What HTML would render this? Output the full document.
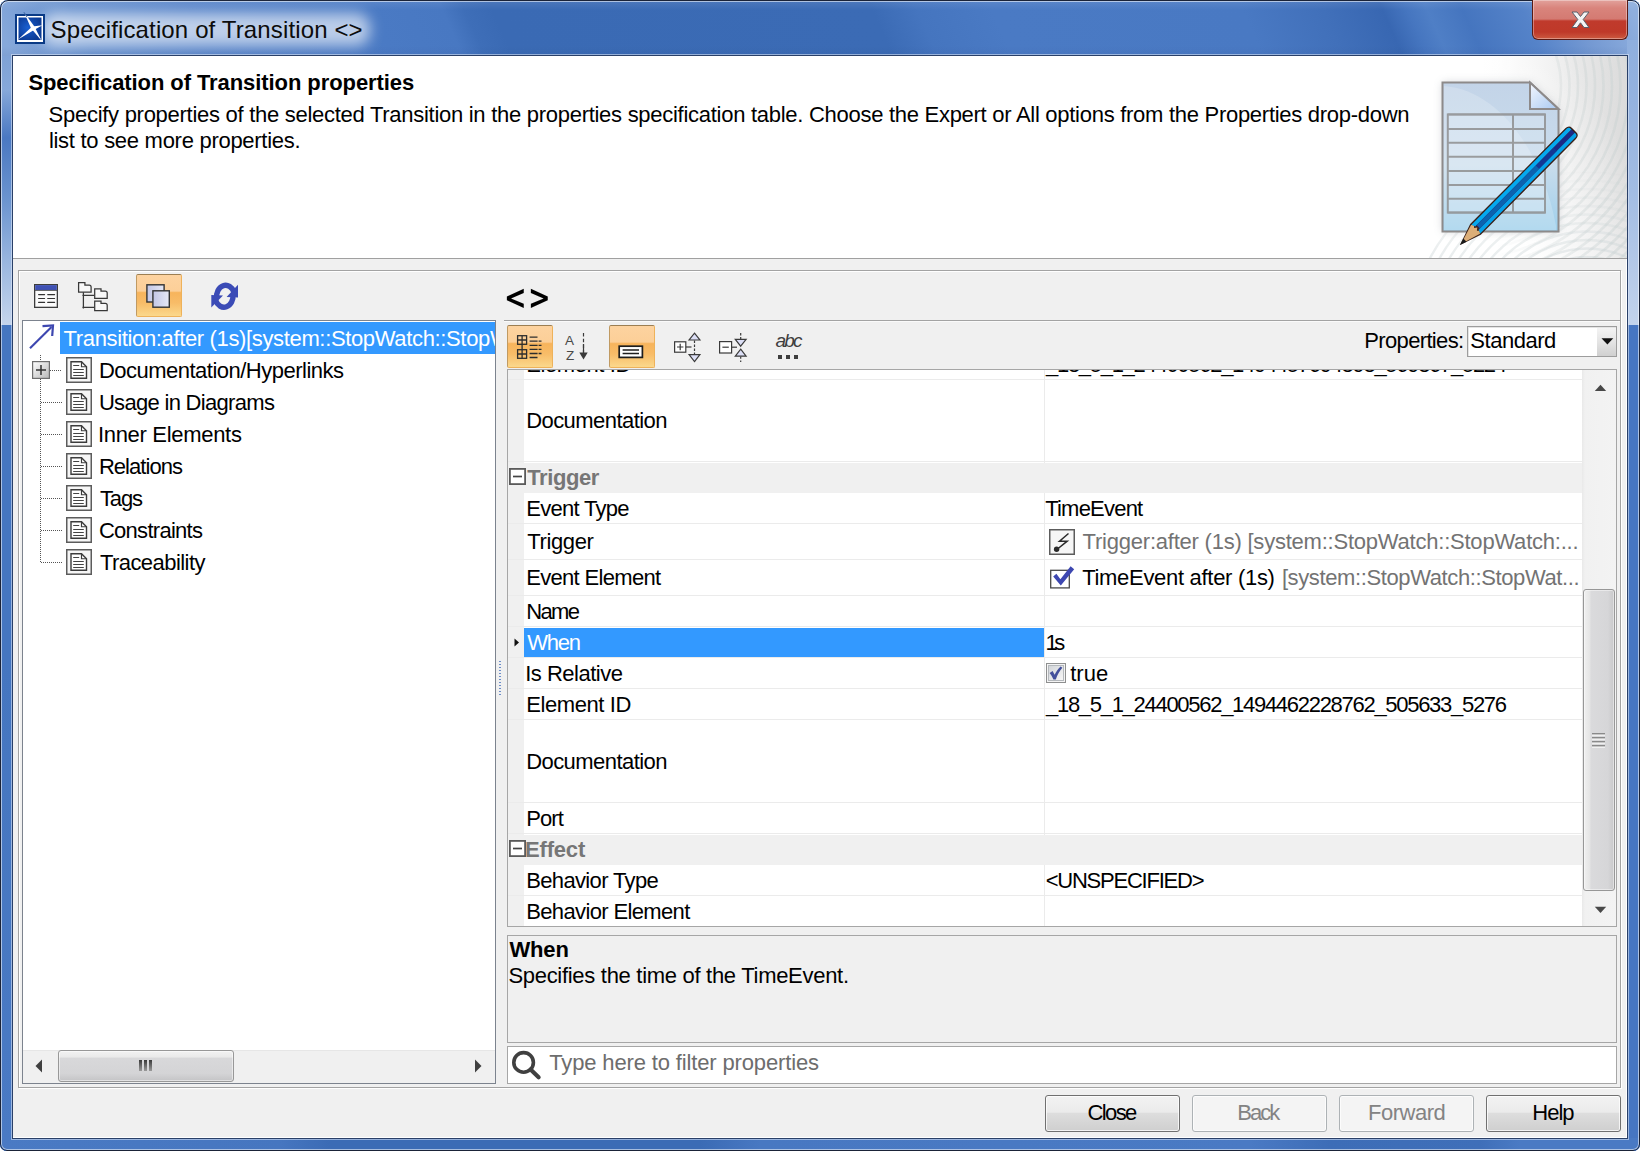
<!DOCTYPE html>
<html lang="en"><head><meta charset="utf-8"><title>Specification of Transition &lt;&gt;</title>
<style>
*{box-sizing:border-box;margin:0;padding:0}
html,body{width:1640px;height:1151px;overflow:hidden;background:#fff}
body{font-family:"Liberation Sans",sans-serif;font-size:22px;color:#000;position:relative}
.a{position:absolute}
.t{position:absolute;white-space:nowrap}
.b{font-weight:bold}
svg{position:absolute;overflow:visible}
#win{left:0;top:0;width:1640px;height:1151px;border-radius:8px 8px 7px 7px;overflow:hidden;background:#4a7ac2}
</style></head>
<body>
<div id="win" class="a">
<!-- sec_frame -->
<div class="a" style="left:0;top:0;width:1640px;height:1151px;background:#4576c0"></div>
<div class="a" style="left:-40px;top:0;width:1760px;height:56px;transform:skewX(24deg);transform-origin:0 0;background:linear-gradient(to right,#86a8da 28px,#7a9fd6 58px,#6690ce 108px,#5582c8 228px,#4a7ac4 408px,#4878c2 478px,#3e6eb8 500px,#3a6ab4 528px,#3b6bb5 908px,#4575bf 953px,#4a7ac4 1028px,#4979c3 1278px,#4170ba 1358px,#3867b2 1418px,#4676c0 1443px,#4f7fc6 1463px,#4575bf 1498px,#5583c9 1558px,#7398d2 1608px,#8fafde 1668px,#8fafde 1728px)"></div>
<div class="a" style="left:0;top:0;width:1640px;height:56px;background:linear-gradient(to bottom,rgba(255,255,255,.10) 0,rgba(255,255,255,0) 10px,rgba(255,255,255,0) 46px,rgba(20,40,90,.06) 56px)"></div>
<div class="a" style="left:0;top:56px;width:13px;height:1095px;background:linear-gradient(to bottom,#7fa2d6 0,#86a8da 34px,#4a78c2 82px,#6b94cf 144px,#98b5df 204px,#c5d5ec 269px,#4576c0 269px,#4576c0 600px,#4a7ac4 100%)"></div>
<div class="a" style="left:1627px;top:40px;width:13px;height:1111px;background:linear-gradient(to bottom,#8fafde 0,#94b2df 60px,#a2bce3 150px,#b5c9e8 230px,#c2d3ec 285px,#4676c2 285px,#4676c2 100%)"></div>
<div class="a" style="left:0;top:1138px;width:1640px;height:13px;background:linear-gradient(to right,#4a7ac4 0,#4676c0 280px,#3b6bb5 330px,#3b6bb5 700px,#4878c2 760px,#4a7ac4 1250px,#3d6db7 1330px,#3f6fb9 1480px,#4a7ac4 1520px,#4a7ac4 1640px)"></div>
<div class="a" style="left:0;top:0;width:1640px;height:1151px;border:1px solid #1a2338;border-radius:8px 8px 7px 7px;box-shadow:inset 0 0 0 1px rgba(255,255,255,.55)"></div>
<div class="a" style="left:42px;top:13px;width:328px;height:33px;border-radius:14px;background:rgba(255,255,255,.62);filter:blur(7px)"></div>
<svg style="left:15px;top:14px" width="30" height="30" viewBox="0 0 30 30"><defs><radialGradient id="ig" cx="0.4" cy="0.45" r="0.6"><stop offset="0" stop-color="#1a5fd0"/><stop offset="1" stop-color="#0b3a94"/></radialGradient></defs><rect x="0" y="0" width="30" height="30" fill="#0a3a86"/><rect x="2" y="2" width="26" height="26" fill="#fff"/><rect x="3.5" y="3.5" width="23" height="22.5" fill="url(#ig)"/><path d="M9 -1.7 L19.4 12.4 L26.8 27.1 L16.2 14.6 Z" fill="#fff"/><path d="M3.4 25.3 L17.2 12.4 L27.4 11.2 L19 15.9 Z" fill="#fff"/><path d="M9 -1.7 L12 3" stroke="#0a3a86" stroke-width=".8"/></svg>
<div class="t" id="ttl" style="left:50.50px;top:13.08px;line-height:34px;height:34px;font-size:24px;letter-spacing:0.135px;color:#0c0c0c;">Specification of Transition &lt;&gt;</div>
<div class="a" style="left:1532px;top:0;width:96px;height:40px;border:1px solid #5a1a14;border-top:none;border-radius:0 0 6px 6px;background:linear-gradient(to bottom,#e2a29c 0,#d9847c 8px,#d47a72 19px,#c03a2c 21px,#bf3929 32px,#cc5a40 39px);box-shadow:inset 0 0 0 1px rgba(255,255,255,.35)"></div>
<svg style="left:1571px;top:11px" width="19" height="18" viewBox="0 0 19 18"><path d="M1 1 H6 L9.5 5.5 L13 1 H18 L12.2 8.5 L18 16.5 H13 L9.5 11.8 L6 16.5 H1 L6.8 8.5 Z" fill="#f4f4f4" stroke="#5a5f6a" stroke-width="1" stroke-linejoin="round"/></svg>
<div class="a" style="left:12px;top:55px;width:1616px;height:1084px;background:#f0f0f0;border:1px solid #2a4068;box-shadow:0 0 0 1px rgba(225,235,250,.55),inset -1px -1px 0 #fff"></div>

<!-- sec_header -->
<div class="a" style="left:13px;top:56px;width:1614px;height:202px;background:linear-gradient(62deg,rgba(255,255,255,1) 0,rgba(255,255,255,1) 88%,rgba(255,255,255,0) 97%),linear-gradient(to right,#fff 0,#fff 1470px,#f1f1f1 1530px,#e4e4e4 1580px,#dbdbdb 1614px)"></div>
<svg style="left:1387px;top:56px;overflow:hidden" width="240" height="202" viewBox="0 0 240 202"><defs><linearGradient id="am" x1="0" y1="0" x2="1" y2="0"><stop offset="0.45" stop-color="#fff" stop-opacity="0"/><stop offset="0.75" stop-color="#fff" stop-opacity=".7"/><stop offset="1" stop-color="#fff" stop-opacity="1"/></linearGradient><linearGradient id="am2" x1="0" y1="0" x2="0" y2="1"><stop offset="0.55" stop-color="#fff" stop-opacity="0"/><stop offset="1" stop-color="#fff" stop-opacity="1"/></linearGradient><mask id="amk"><rect width="240" height="202" fill="url(#am)"/></mask><mask id="amk2"><rect x="40" width="200" height="202" fill="url(#am2)"/></mask></defs><g fill="none" stroke="#c6d0d0" stroke-width="2.6" opacity=".42" mask="url(#amk)"><circle cx="78" cy="30" r="96.0"/><circle cx="78" cy="30" r="104.5"/><circle cx="78" cy="30" r="113.0"/><circle cx="78" cy="30" r="121.5"/><circle cx="78" cy="30" r="130.0"/><circle cx="78" cy="30" r="138.5"/><circle cx="78" cy="30" r="147.0"/><circle cx="78" cy="30" r="155.5"/><circle cx="78" cy="30" r="164.0"/><circle cx="78" cy="30" r="172.5"/><circle cx="78" cy="30" r="181.0"/><circle cx="78" cy="30" r="189.5"/><circle cx="78" cy="30" r="198.0"/><circle cx="78" cy="30" r="206.5"/><circle cx="78" cy="30" r="215.0"/><circle cx="78" cy="30" r="223.5"/><circle cx="78" cy="30" r="232.0"/><circle cx="78" cy="30" r="240.5"/><circle cx="78" cy="30" r="249.0"/><circle cx="78" cy="30" r="257.5"/><circle cx="78" cy="30" r="266.0"/><circle cx="78" cy="30" r="274.5"/></g><g fill="none" stroke="#c8d2d4" stroke-width="2.4" opacity=".4" mask="url(#amk2)"><circle cx="200" cy="285" r="50.0"/><circle cx="200" cy="285" r="58.5"/><circle cx="200" cy="285" r="67.0"/><circle cx="200" cy="285" r="75.5"/><circle cx="200" cy="285" r="84.0"/><circle cx="200" cy="285" r="92.5"/><circle cx="200" cy="285" r="101.0"/><circle cx="200" cy="285" r="109.5"/><circle cx="200" cy="285" r="118.0"/><circle cx="200" cy="285" r="126.5"/><circle cx="200" cy="285" r="135.0"/><circle cx="200" cy="285" r="143.5"/><circle cx="200" cy="285" r="152.0"/><circle cx="200" cy="285" r="160.5"/><circle cx="200" cy="285" r="169.0"/><circle cx="200" cy="285" r="177.5"/></g></svg>
<div class="a" style="left:13px;top:258px;width:1614px;height:1px;background:#a0a0a0"></div>
<div class="t b" id="h1" style="left:28.40px;top:68.18px;line-height:29px;height:29px;letter-spacing:-0.078px;">Specification of Transition properties</div>
<div class="t" id="h2" style="left:48.60px;top:102.28px;line-height:26px;height:26px;letter-spacing:-0.277px;">Specify properties of the selected Transition in the properties specification table. Choose the Expert or All options from the Properties drop-down</div>
<div class="t" id="h3" style="left:48.90px;top:128.18px;line-height:26px;height:26px;letter-spacing:-0.278px;">list to see more properties.</div>
<svg style="left:1436px;top:76px" width="150" height="175" viewBox="0 0 150 175"><defs><linearGradient id="dg" x1="0" y1="0" x2="0" y2="1"><stop offset="0" stop-color="#c3d4e8"/><stop offset=".55" stop-color="#c9dcec"/><stop offset="1" stop-color="#9fd0ec"/></linearGradient><linearGradient id="fg" x1="0" y1="0" x2="1" y2="1"><stop offset="0" stop-color="#f4f8ff"/><stop offset="1" stop-color="#a8c8f0"/></linearGradient><filter id="sh" x="-20%" y="-20%" width="140%" height="140%"><feGaussianBlur stdDeviation="4"/></filter></defs><path d="M6.5 6.5 H94 L122.5 33 V155.5 H6.5 Z" fill="#9aa0a8" opacity=".45" filter="url(#sh)"/><path d="M6.5 6.5 H94 L122.5 33 V155.5 H6.5 Z" fill="url(#dg)" stroke="#8d8a8a" stroke-width="2" stroke-linejoin="miter"/><path d="M8 10 C60 14 105 70 120 150 V154 H8 Z" fill="#fff" opacity=".2"/><path d="M94 6.5 V33 H122.5 Z" fill="url(#fg)" stroke="#8d8a8a" stroke-width="2" stroke-linejoin="miter"/><g stroke="#8c8b8b" stroke-width="2" fill="none" opacity=".8"><rect x="11.8" y="38.4" width="97.2" height="98.2" fill="#e8f0f8" fill-opacity=".35"/><line x1="11.8" y1="38.4" x2="109.0" y2="38.4"/><line x1="11.8" y1="53.0" x2="109.0" y2="53.0"/><line x1="11.8" y1="66.7" x2="109.0" y2="66.7"/><line x1="11.8" y1="80.7" x2="109.0" y2="80.7"/><line x1="11.8" y1="95.0" x2="109.0" y2="95.0"/><line x1="11.8" y1="108.9" x2="109.0" y2="108.9"/><line x1="11.8" y1="122.7" x2="109.0" y2="122.7"/><line x1="11.8" y1="136.6" x2="109.0" y2="136.6"/><line x1="77.0" y1="38.4" x2="77.0" y2="136.6"/></g><g transform="translate(24 169) rotate(-45.2)"><path d="M0 0 L22 -7.5 H157 Q162 -7.5 162 -3 V3 Q162 7.5 157 7.5 H22 Z" fill="#3a2018"/><path d="M1.5 0 L22 -6.3 L24 -4 L22 -2 L24.5 0 L22 2 L24 4 L22 6.3 Z" fill="#dcae78"/><path d="M0 0 L7 -2.3 L7 2.3 Z" fill="#1a1a1a"/><path d="M22.5 -6.2 H158 Q160.5 -6.2 160.5 -3 V-2.2 H24 Z" fill="#05a9ef"/><path d="M24.5 -2.2 H160.5 V2.4 H24.5 L26 0 Z" fill="#1c2a86"/><path d="M24 2.4 H160.5 V3.2 Q160.5 6.2 158 6.2 H22.5 Z" fill="#05a0ea"/><path d="M26 -2.2 H110 V2.4 H26 Z" fill="#0a68b4" opacity=".9"/><path d="M110 -2.2 H135 V2.4 H110 Z" fill="#123c98" opacity=".8"/></g></svg>

<!-- sec_left -->
<div class="a" style="left:18px;top:270px;width:1603px;height:818px;border:1px solid #a3a3a3;box-shadow:inset 1px 1px 0 #fff,1px 1px 0 #fff"></div>
<svg style="left:34px;top:284px" width="24" height="24" viewBox="0 0 24 24"><rect x=".65" y=".65" width="22.7" height="22.7" fill="#fbfbfb" stroke="#3c3c3c" stroke-width="1.3"/><rect x="1.2" y="1.1" width="21.6" height="5" fill="#3f51b5"/><path d="M.6 6.4 H23.4" stroke="#4a4a4a" stroke-width=".9"/><path d="M4.6 10.6 H10.6 M13.7 10.6 H20.6 M4.6 14.5 H10.6 M13.7 14.5 H20.6 M4.6 18.4 H10.6 M13.7 18.4 H20.6" stroke="#333" stroke-width="1.15" stroke-linecap="round"/></svg>
<svg style="left:77px;top:281px" width="32" height="32" viewBox="0 0 32 32"><path d="M6.4 11.2 V27.6 M5.4 14.4 H17 M5.4 26.4 H17" fill="none" stroke="#383838" stroke-width="1.25"/><path d="M1.6 1.6 h6.3 v2.4 h4.3 q1.9 0 1.9 1.9 v5.2 h-12.5 z" fill="#f8f8f8" stroke="#383838" stroke-width="1.25" stroke-linejoin="miter"/><path d="M17.7 7.8 h6.3 v2.4 h4.3 q1.9 0 1.9 1.9 v5.2 h-12.5 z" fill="#f8f8f8" stroke="#383838" stroke-width="1.25" stroke-linejoin="miter"/><path d="M17.7 20 h6.3 v2.4 h4.3 q1.9 0 1.9 1.9 v5.2 h-12.5 z" fill="#f8f8f8" stroke="#383838" stroke-width="1.25" stroke-linejoin="miter"/></svg>
<div class="a" style="left:136px;top:274px;width:46px;height:43px;background:linear-gradient(to bottom,#fdd3a0 0,#fccf98 39%,#f7b45c 43%,#f8bc68 68%,#fbd88c 100%);border:1px solid #eeb25a;border-top-color:#9c7e52;border-left-color:#c09a62;border-radius:2px;"></div>
<svg style="left:145px;top:283px" width="27" height="27" viewBox="0 0 27 27"><defs><linearGradient id="cg" x1="0" y1="0" x2="1" y2="0"><stop offset="0" stop-color="#c2c6e6"/><stop offset="1" stop-color="#e6e8f5"/></linearGradient></defs><rect x="1.9" y="1.8" width="17.2" height="17.2" fill="url(#cg)" stroke="#333" stroke-width="1.4"/><rect x="7.9" y="7.8" width="16.4" height="16.4" fill="url(#cg)" stroke="#333" stroke-width="1.4"/></svg>
<svg style="left:210.5px;top:282px" width="28" height="29" viewBox="0 0 28 29"><g fill="none" stroke="#3b4bb6" stroke-width="5.4"><path d="M5.74 16.21 A9.0 11.0 0 0 1 22.94 10.18"/><path d="M21.86 12.29 A9.0 11.0 0 0 1 4.66 18.32"/></g><path d="M27 2.8 L27 15.6 L15.6 14.9 Z" fill="#3b4bb6"/><path d="M.3 25.6 L.3 13 L12 13.5 Z" fill="#3b4bb6"/></svg>
<div class="a" style="left:22px;top:320px;width:474px;height:764px;background:#fff;border:1px solid #7c838e"></div>
<div class="a" style="left:60px;top:322px;width:435px;height:32px;background:#3399ff;overflow:hidden"><div class="t" id="trs" style="left:3.50px;top:1.73px;line-height:29px;height:29px;color:#fff;letter-spacing:-0.351px;">Transition:after (1s)[system::StopWatch::StopWatch::running</div>
</div>
<svg style="left:28px;top:323px" width="28" height="28" viewBox="0 0 28 28"><path d="M2 25.2 L23.5 4" stroke="#3d47b0" stroke-width="2.1" fill="none"/><path d="M14.5 3.2 L25 2.4 L24.2 13" stroke="#3d47b0" stroke-width="2.2" fill="none" stroke-linejoin="miter"/></svg>
<div class="a" style="left:40px;top:355px;width:1px;height:208px;background:repeating-linear-gradient(to bottom,#555 0,#555 1px,transparent 1px,transparent 2px)"></div>
<div class="a" style="left:50px;top:370px;width:12px;height:1px;background:repeating-linear-gradient(to right,#555 0,#555 1px,transparent 1px,transparent 2px)"></div>
<svg style="left:66px;top:357px" width="26" height="26" viewBox="0 0 26 26"><rect x=".75" y=".75" width="24.5" height="24.5" fill="#f6f6f6" stroke="#5c5c5c" stroke-width="1.5"/><path d="M5 4.75 H15.5 L20.5 9.75 V21.25 H5 Z" fill="#fff" stroke="#3c3c3c" stroke-width="1.4" stroke-linejoin="miter"/><path d="M15.5 4.75 V9.75 H20.5" fill="none" stroke="#3c3c3c" stroke-width="1.2"/><path d="M7.2 8.5 H13.2 M7.2 12.5 H17.8 M7.2 15.5 H17.8 M7.2 18.5 H17.8" stroke="#444" stroke-width="1"/></svg>
<div class="t" id="tr0" style="left:98.90px;top:355.73px;line-height:29px;height:29px;letter-spacing:-0.508px;">Documentation/Hyperlinks</div>
<div class="a" style="left:41px;top:402px;width:21px;height:1px;background:repeating-linear-gradient(to right,#555 0,#555 1px,transparent 1px,transparent 2px)"></div>
<svg style="left:66px;top:389px" width="26" height="26" viewBox="0 0 26 26"><rect x=".75" y=".75" width="24.5" height="24.5" fill="#f6f6f6" stroke="#5c5c5c" stroke-width="1.5"/><path d="M5 4.75 H15.5 L20.5 9.75 V21.25 H5 Z" fill="#fff" stroke="#3c3c3c" stroke-width="1.4" stroke-linejoin="miter"/><path d="M15.5 4.75 V9.75 H20.5" fill="none" stroke="#3c3c3c" stroke-width="1.2"/><path d="M7.2 8.5 H13.2 M7.2 12.5 H17.8 M7.2 15.5 H17.8 M7.2 18.5 H17.8" stroke="#444" stroke-width="1"/></svg>
<div class="t" id="tr1" style="left:98.90px;top:387.73px;line-height:29px;height:29px;letter-spacing:-0.692px;">Usage in Diagrams</div>
<div class="a" style="left:41px;top:434px;width:21px;height:1px;background:repeating-linear-gradient(to right,#555 0,#555 1px,transparent 1px,transparent 2px)"></div>
<svg style="left:66px;top:421px" width="26" height="26" viewBox="0 0 26 26"><rect x=".75" y=".75" width="24.5" height="24.5" fill="#f6f6f6" stroke="#5c5c5c" stroke-width="1.5"/><path d="M5 4.75 H15.5 L20.5 9.75 V21.25 H5 Z" fill="#fff" stroke="#3c3c3c" stroke-width="1.4" stroke-linejoin="miter"/><path d="M15.5 4.75 V9.75 H20.5" fill="none" stroke="#3c3c3c" stroke-width="1.2"/><path d="M7.2 8.5 H13.2 M7.2 12.5 H17.8 M7.2 15.5 H17.8 M7.2 18.5 H17.8" stroke="#444" stroke-width="1"/></svg>
<div class="t" id="tr2" style="left:97.90px;top:419.73px;line-height:29px;height:29px;letter-spacing:-0.305px;">Inner Elements</div>
<div class="a" style="left:41px;top:466px;width:21px;height:1px;background:repeating-linear-gradient(to right,#555 0,#555 1px,transparent 1px,transparent 2px)"></div>
<svg style="left:66px;top:453px" width="26" height="26" viewBox="0 0 26 26"><rect x=".75" y=".75" width="24.5" height="24.5" fill="#f6f6f6" stroke="#5c5c5c" stroke-width="1.5"/><path d="M5 4.75 H15.5 L20.5 9.75 V21.25 H5 Z" fill="#fff" stroke="#3c3c3c" stroke-width="1.4" stroke-linejoin="miter"/><path d="M15.5 4.75 V9.75 H20.5" fill="none" stroke="#3c3c3c" stroke-width="1.2"/><path d="M7.2 8.5 H13.2 M7.2 12.5 H17.8 M7.2 15.5 H17.8 M7.2 18.5 H17.8" stroke="#444" stroke-width="1"/></svg>
<div class="t" id="tr3" style="left:98.90px;top:451.73px;line-height:29px;height:29px;letter-spacing:-0.952px;">Relations</div>
<div class="a" style="left:41px;top:498px;width:21px;height:1px;background:repeating-linear-gradient(to right,#555 0,#555 1px,transparent 1px,transparent 2px)"></div>
<svg style="left:66px;top:485px" width="26" height="26" viewBox="0 0 26 26"><rect x=".75" y=".75" width="24.5" height="24.5" fill="#f6f6f6" stroke="#5c5c5c" stroke-width="1.5"/><path d="M5 4.75 H15.5 L20.5 9.75 V21.25 H5 Z" fill="#fff" stroke="#3c3c3c" stroke-width="1.4" stroke-linejoin="miter"/><path d="M15.5 4.75 V9.75 H20.5" fill="none" stroke="#3c3c3c" stroke-width="1.2"/><path d="M7.2 8.5 H13.2 M7.2 12.5 H17.8 M7.2 15.5 H17.8 M7.2 18.5 H17.8" stroke="#444" stroke-width="1"/></svg>
<div class="t" id="tr4" style="left:99.90px;top:483.73px;line-height:29px;height:29px;letter-spacing:-1.124px;">Tags</div>
<div class="a" style="left:41px;top:530px;width:21px;height:1px;background:repeating-linear-gradient(to right,#555 0,#555 1px,transparent 1px,transparent 2px)"></div>
<svg style="left:66px;top:517px" width="26" height="26" viewBox="0 0 26 26"><rect x=".75" y=".75" width="24.5" height="24.5" fill="#f6f6f6" stroke="#5c5c5c" stroke-width="1.5"/><path d="M5 4.75 H15.5 L20.5 9.75 V21.25 H5 Z" fill="#fff" stroke="#3c3c3c" stroke-width="1.4" stroke-linejoin="miter"/><path d="M15.5 4.75 V9.75 H20.5" fill="none" stroke="#3c3c3c" stroke-width="1.2"/><path d="M7.2 8.5 H13.2 M7.2 12.5 H17.8 M7.2 15.5 H17.8 M7.2 18.5 H17.8" stroke="#444" stroke-width="1"/></svg>
<div class="t" id="tr5" style="left:98.90px;top:515.73px;line-height:29px;height:29px;letter-spacing:-0.717px;">Constraints</div>
<div class="a" style="left:41px;top:562px;width:21px;height:1px;background:repeating-linear-gradient(to right,#555 0,#555 1px,transparent 1px,transparent 2px)"></div>
<svg style="left:66px;top:549px" width="26" height="26" viewBox="0 0 26 26"><rect x=".75" y=".75" width="24.5" height="24.5" fill="#f6f6f6" stroke="#5c5c5c" stroke-width="1.5"/><path d="M5 4.75 H15.5 L20.5 9.75 V21.25 H5 Z" fill="#fff" stroke="#3c3c3c" stroke-width="1.4" stroke-linejoin="miter"/><path d="M15.5 4.75 V9.75 H20.5" fill="none" stroke="#3c3c3c" stroke-width="1.2"/><path d="M7.2 8.5 H13.2 M7.2 12.5 H17.8 M7.2 15.5 H17.8 M7.2 18.5 H17.8" stroke="#444" stroke-width="1"/></svg>
<div class="t" id="tr6" style="left:99.90px;top:547.73px;line-height:29px;height:29px;letter-spacing:-0.551px;">Traceability</div>
<svg style="left:32px;top:361px" width="18" height="18" viewBox="0 0 18 18"><defs><linearGradient id="pg" x1="0" y1="0" x2="1" y2="1"><stop offset="0" stop-color="#fff"/><stop offset="1" stop-color="#b8b8b8"/></linearGradient></defs><rect x=".6" y=".6" width="16.8" height="16.8" fill="url(#pg)" stroke="#6e6e6e" stroke-width="1.2"/><path d="M4 9 H14 M9 4 V14" stroke="#333" stroke-width="1.5"/></svg>
<div class="a" style="left:23px;top:1050px;width:472px;height:33px;background:#f0f0f0;border-top:1px solid #e6e6e6"></div>
<div class="a" style="left:58px;top:1050px;width:176px;height:32px;border:1px solid #989898;border-radius:3px;background:linear-gradient(to bottom,#f2f2f2 0,#eaeaea 20%,#d8d8da 24%,#d4d4d6 75%,#c4c4c6 100%);box-shadow:inset 0 0 0 1px rgba(255,255,255,.5)"></div>
<svg style="left:138px;top:1059px" width="16" height="13" viewBox="0 0 16 13"><defs><linearGradient id="gr" x1="0" y1="0" x2="0" y2="1"><stop offset="0" stop-color="#3a3a3a"/><stop offset="1" stop-color="#9a9a9a"/></linearGradient></defs><rect x="1" y="1" width="3" height="11" fill="url(#gr)"/><rect x="6" y="1" width="3" height="11" fill="url(#gr)"/><rect x="11" y="1" width="3" height="11" fill="url(#gr)"/></svg>
<svg style="left:35px;top:1059px" width="8" height="14" viewBox="0 0 8 14"><path d="M7 .5 V13.5 L.5 7 Z" fill="#404040"/></svg>
<svg style="left:474px;top:1059px" width="8" height="14" viewBox="0 0 8 14"><path d="M1 .5 V13.5 L7.5 7 Z" fill="#404040"/></svg>
<div class="a" style="left:499px;top:661px;width:2px;height:34px;background:repeating-linear-gradient(to bottom,#6b8cc8 0,#6b8cc8 1.5px,transparent 1.5px,transparent 3px)"></div>

<!-- sec_right -->
<div class="t b" id="ang" style="left:504.00px;top:281.76px;line-height:35px;height:35px;font-size:27px;letter-spacing:1.377px;font-family:'DejaVu Sans',sans-serif;transform:scaleY(1.24);transform-origin:0 28.2px;">&lt;&gt;</div>
<div class="a" style="left:504px;top:320px;width:1116px;height:1px;background:#a3a3a3"></div>
<div class="a" style="left:504px;top:321px;width:1116px;height:1px;background:#fafafa"></div>
<div class="a" style="left:507px;top:325px;width:46px;height:43px;background:linear-gradient(to bottom,#fdd3a0 0,#fccf98 39%,#f7b45c 43%,#f8bc68 68%,#fbd88c 100%);border:1px solid #eeb25a;border-top-color:#9c7e52;border-left-color:#c09a62;border-radius:2px;"></div>
<div class="a" style="left:609px;top:325px;width:46px;height:43px;background:linear-gradient(to bottom,#fdd3a0 0,#fccf98 39%,#f7b45c 43%,#f8bc68 68%,#fbd88c 100%);border:1px solid #eeb25a;border-top-color:#9c7e52;border-left-color:#c09a62;border-radius:2px;"></div>
<svg style="left:516px;top:334px" width="28" height="26" viewBox="0 0 28 26"><g fill="none" stroke="#2e2e2e" stroke-width="1.3"><rect x="1.6" y="1.7" width="9" height="8.6"/><path d="M6.1 1.7 V10.3 M1.6 6 H10.6"/><rect x="1.6" y="15.7" width="9" height="8.6"/><path d="M6.1 15.7 V24.3 M1.6 20 H10.6"/><path d="M6.1 10.3 V15.7"/><path d="M13.6 3.2 H21.5 M13.6 7.2 H25.5 M13.6 11.3 H25.5 M13.6 15.4 H25.5 M13.6 19.5 H25.5 M13.6 23.5 H21.5" stroke-dasharray="8 1"/></g></svg>
<div class="t" style="left:565px;top:333px;font-size:13.5px;line-height:15px;height:15px;color:#4a4a4a">A</div>
<div class="t" style="left:566px;top:347.5px;font-size:13.5px;line-height:15px;height:15px;color:#4a4a4a">Z</div>
<svg style="left:578px;top:332px" width="12" height="30" viewBox="0 0 12 30"><path d="M5.5 1 V22" stroke="#3a3a3a" stroke-width="1.2" stroke-dasharray="3.5 2.2" fill="none"/><path d="M5.5 12 V22" stroke="#3a3a3a" stroke-width="1.2" fill="none"/><path d="M1.3 20.6 H9.7 L5.5 27.4 Z" fill="#3a3a3a"/></svg>
<svg style="left:618px;top:345px" width="26" height="14" viewBox="0 0 26 14"><rect x="1.2" y="1.2" width="23.2" height="11.2" fill="#fff" stroke="#1e1e1e" stroke-width="1.7"/><path d="M4.6 5 H21 M4.6 8.6 H21" stroke="#1e1e1e" stroke-width="1.5"/></svg>
<svg style="left:673px;top:332px" width="30" height="31" viewBox="0 0 30 31"><g fill="none" stroke="#3a3a3a" stroke-width="1.2"><rect x="1.6" y="9.8" width="11.2" height="10.4" fill="#fff"/><path d="M4 15 H10.4 M7.2 11.8 V18.2"/><path d="M12.8 15 H18.5"/><path d="M21.5 8.5 V22" stroke-dasharray="2.4 1.6"/><path d="M21.5 1.2 L26.9 8 H16.1 Z" fill="#dcdff6"/><path d="M21.5 29.6 L26.9 22.6 H16.1 Z" fill="#dcdff6"/></g></svg>
<svg style="left:718px;top:332px" width="30" height="31" viewBox="0 0 30 31"><g fill="none" stroke="#3a3a3a" stroke-width="1.2"><rect x="1.6" y="9.6" width="12" height="11.4" fill="#fff"/><path d="M4.4 15.2 H10.8"/><path d="M13.6 15.2 H19"/><path d="M22.7 1 V7.2 M22.7 24.4 V30" stroke-dasharray="2.4 1.6"/><path d="M22.7 14.2 L28.1 7.4 H17.3 Z" fill="#dcdff6"/><path d="M22.7 17.2 L28.1 24.2 H17.3 Z" fill="#dcdff6"/></g></svg>
<div class="t" id="abc" style="left:775.50px;top:327.72px;line-height:25px;height:25px;font-size:19px;letter-spacing:-1.817px;color:#3e3e3e;font-style:italic;">abc</div>
<div class="a" style="left:778px;top:355px;width:4px;height:4px;background:#3e3e3e"></div><div class="a" style="left:786px;top:355px;width:4px;height:4px;background:#3e3e3e"></div><div class="a" style="left:794px;top:355px;width:4px;height:4px;background:#3e3e3e"></div>
<div class="t" id="plbl" style="left:1364.30px;top:326.08px;line-height:29px;height:29px;letter-spacing:-0.657px;">Properties:</div>
<div class="a" style="left:1467px;top:326px;width:150px;height:31px;background:#fff;border:1px solid #9d9d9d;box-shadow:inset 1px 1px 0 #e4e4e4"></div>
<div class="a" style="left:1597px;top:328px;width:19px;height:28px;background:linear-gradient(to bottom,#f4f4f4 0,#e4e4e4 50%,#d0d0d0 100%)"></div>
<svg style="left:1601px;top:338px" width="13" height="7" viewBox="0 0 13 7"><path d="M.5 .3 H12.3 L6.4 6.6 Z" fill="#111"/></svg>
<div class="t" id="pstd" style="left:1470.30px;top:326.08px;line-height:29px;height:29px;letter-spacing:-0.479px;">Standard</div>
<div class="a" style="left:507px;top:369px;width:1110px;height:558px;background:#fff;border:1px solid #a6a6a6"></div>
<div class="a" style="left:508px;top:370px;width:16px;height:556px;background:#f0f0f0"></div>
<div class="a" style="left:1582px;top:370px;width:34px;height:556px;background:linear-gradient(to right,#e9e9e9 0,#f1f1f1 3px,#f3f3f3 100%)"></div>
<div class="a" style="left:508px;top:370px;width:1074px;height:9px;overflow:hidden"><div class="t" style="left:18.30px;top:-20.27px;line-height:29px;height:29px;letter-spacing:-0.426px;">Element ID</div>
<div class="t" style="left:538.00px;top:-20.27px;line-height:29px;height:29px;letter-spacing:-1.289px;">_18_5_1_24400562_1494457694898_569867_5224</div>
</div>
<div class="a" style="left:508px;top:379px;width:1074px;height:1px;background:#ebebeb"></div>
<div class="a" style="left:508px;top:461px;width:1074px;height:1px;background:#ebebeb"></div>
<div class="t" style="left:526.20px;top:406.18px;line-height:29px;height:29px;letter-spacing:-0.562px;">Documentation</div>
<div class="a" style="left:508px;top:463px;width:1074px;height:30px;background:#f0f0f0"></div>
<svg style="left:509px;top:468px" width="17" height="17" viewBox="0 0 17 17"><rect x=".9" y=".9" width="15.2" height="15.2" fill="#fff" stroke="#5a5a5a" stroke-width="1.8"/><path d="M4 8.5 H13" stroke="#444" stroke-width="1.7"/></svg>
<div class="t b" style="left:527.30px;top:463.23px;line-height:29px;height:29px;letter-spacing:-0.435px;color:#767676;">Trigger</div>
<div class="a" style="left:508px;top:523px;width:1074px;height:1px;background:#ebebeb"></div>
<div class="t" style="left:526.20px;top:493.68px;line-height:29px;height:29px;letter-spacing:-0.703px;">Event Type</div>
<div class="a" style="left:508px;top:559px;width:1074px;height:1px;background:#ebebeb"></div>
<div class="t" style="left:527.20px;top:527.18px;line-height:29px;height:29px;letter-spacing:-0.357px;">Trigger</div>
<div class="a" style="left:508px;top:595px;width:1074px;height:1px;background:#ebebeb"></div>
<div class="t" style="left:526.20px;top:563.18px;line-height:29px;height:29px;letter-spacing:-0.680px;">Event Element</div>
<div class="a" style="left:508px;top:626px;width:1074px;height:1px;background:#ebebeb"></div>
<div class="t" style="left:526.20px;top:596.68px;line-height:29px;height:29px;letter-spacing:-1.650px;">Name</div>
<div class="a" style="left:508px;top:657px;width:1074px;height:1px;background:#ebebeb"></div>
<div class="a" style="left:524px;top:628px;width:520px;height:29px;background:#3399ff"></div>
<svg style="left:514px;top:638px" width="6" height="9" viewBox="0 0 6 9"><path d="M.5 .5 V8.5 L5 4.5 Z" fill="#111"/></svg>
<div class="t" style="left:527.20px;top:627.68px;line-height:29px;height:29px;letter-spacing:-1.245px;color:#fff;">When</div>
<div class="a" style="left:508px;top:688px;width:1074px;height:1px;background:#ebebeb"></div>
<div class="t" style="left:525.20px;top:658.68px;line-height:29px;height:29px;letter-spacing:-0.487px;">Is Relative</div>
<div class="a" style="left:508px;top:719px;width:1074px;height:1px;background:#ebebeb"></div>
<div class="t" style="left:526.20px;top:689.68px;line-height:29px;height:29px;letter-spacing:-0.415px;">Element ID</div>
<div class="a" style="left:508px;top:802px;width:1074px;height:1px;background:#ebebeb"></div>
<div class="t" style="left:526.20px;top:746.68px;line-height:29px;height:29px;letter-spacing:-0.562px;">Documentation</div>
<div class="a" style="left:508px;top:833px;width:1074px;height:1px;background:#ebebeb"></div>
<div class="t" style="left:526.20px;top:803.68px;line-height:29px;height:29px;letter-spacing:-0.912px;">Port</div>
<div class="a" style="left:508px;top:835px;width:1074px;height:30px;background:#f0f0f0"></div>
<svg style="left:509px;top:840px" width="17" height="17" viewBox="0 0 17 17"><rect x=".9" y=".9" width="15.2" height="15.2" fill="#fff" stroke="#5a5a5a" stroke-width="1.8"/><path d="M4 8.5 H13" stroke="#444" stroke-width="1.7"/></svg>
<div class="t b" style="left:525.00px;top:835.23px;line-height:29px;height:29px;letter-spacing:-0.179px;color:#767676;">Effect</div>
<div class="a" style="left:508px;top:895px;width:1074px;height:1px;background:#ebebeb"></div>
<div class="t" style="left:526.20px;top:865.68px;line-height:29px;height:29px;letter-spacing:-0.642px;">Behavior Type</div>
<div class="t" style="left:526.20px;top:896.68px;line-height:29px;height:29px;letter-spacing:-0.636px;">Behavior Element</div>
<div class="a" style="left:1044px;top:370px;width:1px;height:556px;background:#ebebeb"></div>
<div class="a" style="left:1044px;top:463px;width:1px;height:30px;background:#f0f0f0"></div><div class="a" style="left:1044px;top:835px;width:1px;height:30px;background:#f0f0f0"></div>
<div class="t" style="left:1045.20px;top:493.78px;line-height:29px;height:29px;letter-spacing:-0.789px;">TimeEvent</div>
<svg style="left:1049px;top:529px" width="26" height="26" viewBox="0 0 26 26"><rect x=".75" y=".75" width="24.5" height="24.5" fill="#f6f6f6" stroke="#5c5c5c" stroke-width="1.5"/><path d="M19.5 4.5 L10.5 12.2 H18.2 L8.5 20" fill="none" stroke="#2a2a2a" stroke-width="1.5" stroke-linejoin="miter"/><circle cx="7.6" cy="20.2" r="2.7" fill="#2a2a2a"/></svg>
<div class="t" style="left:1082.60px;top:527.18px;line-height:29px;height:29px;letter-spacing:-0.223px;color:#737373;">Trigger:after (1s) [system::StopWatch::StopWatch:...</div>
<svg style="left:1049px;top:564px" width="28" height="26" viewBox="0 0 28 26"><rect x="1.7" y="6.3" width="18.6" height="17.6" fill="#fff" stroke="#4a4a4a" stroke-width="1.3"/><path d="M4.2 12.6 L7.4 9.8 L11.4 15.2 L21.6 2.2 L25.2 5.2 L11.8 21.6 Z" fill="#3d47b0"/></svg>
<div class="t" style="left:1082.20px;top:563.18px;line-height:29px;height:29px;letter-spacing:-0.302px;">TimeEvent after (1s)</div>
<div class="t" style="left:1281.90px;top:563.18px;line-height:29px;height:29px;letter-spacing:-0.386px;color:#737373;">[system::StopWatch::StopWat...</div>
<div class="t" style="left:1045.50px;top:627.78px;line-height:29px;height:29px;letter-spacing:-3.435px;">1s</div>
<div class="a" style="left:1046px;top:663px;width:20px;height:20px;border:1px solid #8e8f8f;background:#f4f4f4;box-shadow:inset 0 0 0 1px #f4f4f4,inset 0 0 0 2px #b4b8bc"></div><div class="a" style="left:1049px;top:666px;width:14px;height:14px;background:linear-gradient(135deg,#d2d5d9 0,#f6f6f6 100%)"></div>
<svg style="left:1048px;top:665px" width="16" height="16" viewBox="0 0 16 16"><path d="M1.6 8 L4.6 6 L6.6 9.8 C8.2 6.4 10.2 3.6 12.6 1.4 L14.4 2.8 C11.6 6 9.4 9.8 7.8 14.4 H5.4 C4.4 12 3.2 9.8 1.6 8 Z" fill="#43509c"/></svg>
<div class="t" style="left:1070.20px;top:658.78px;line-height:29px;height:29px;letter-spacing:0.042px;">true</div>
<div class="t" style="left:1046.00px;top:689.78px;line-height:29px;height:29px;letter-spacing:-1.289px;">_18_5_1_24400562_1494462228762_505633_5276</div>
<div class="t" style="left:1045.70px;top:865.78px;line-height:29px;height:29px;letter-spacing:-1.230px;">&lt;UNSPECIFIED&gt;</div>
<div class="a" style="left:1583px;top:589px;width:32px;height:302px;border:1px solid #979797;border-radius:3px;background:linear-gradient(to right,#f0f0f0 0,#e6e6e6 18%,#dadadc 24%,#d6d6d8 80%,#c8c8ca 100%);box-shadow:inset 0 0 0 1px rgba(255,255,255,.45)"></div>
<svg style="left:1592px;top:733px" width="14" height="15" viewBox="0 0 14 15"><g fill="#8a8a8a"><rect x="0" y="0" width="13" height="1.6"/><rect x="0" y="4" width="13" height="1.6"/><rect x="0" y="8" width="13" height="1.6"/><rect x="0" y="12" width="13" height="1.6"/></g><g fill="#f6f6f6"><rect x="0" y="1.6" width="13" height="1.2"/><rect x="0" y="5.6" width="13" height="1.2"/><rect x="0" y="9.6" width="13" height="1.2"/><rect x="0" y="13.6" width="13" height="1.2"/></g></svg>
<svg style="left:1594px;top:384px" width="13" height="8" viewBox="0 0 13 8"><path d="M6.5 .8 L12.2 7 H.8 Z" fill="#484848"/></svg>
<svg style="left:1594px;top:906px" width="13" height="8" viewBox="0 0 13 8"><path d="M6.5 7 L12.2 .8 H.8 Z" fill="#484848"/></svg>
<div class="a" style="left:507px;top:935px;width:1110px;height:108px;background:#f0f0f0;border:1px solid #a6a6a6"></div>
<div class="t b" id="dw" style="left:509.40px;top:935.48px;line-height:29px;height:29px;letter-spacing:-0.113px;">When</div>
<div class="t" id="ds" style="left:508.40px;top:961.28px;line-height:29px;height:29px;letter-spacing:-0.295px;">Specifies the time of the TimeEvent.</div>
<div class="a" style="left:507px;top:1046px;width:1110px;height:38px;background:#fff;border:1px solid #a6a6a6"></div>
<svg style="left:510px;top:1049px" width="32" height="32" viewBox="0 0 32 32"><circle cx="13.6" cy="13.4" r="9.8" fill="none" stroke="#404040" stroke-width="3.6"/><path d="M20.6 20.6 L28.6 28.2" stroke="#404040" stroke-width="4.2" stroke-linecap="round"/></svg>
<div class="t" id="flt" style="left:549.20px;top:1047.68px;line-height:29px;height:29px;letter-spacing:-0.142px;color:#6d6d6d;">Type here to filter properties</div>

<!-- sec_buttons -->
<div class="a" style="left:1045px;top:1095px;width:135px;height:37px;border:1px solid #707070;border-radius:3px;background:linear-gradient(to bottom,#f2f2f2 0,#ebebeb 46%,#dddddd 50%,#cfcfcf 100%);box-shadow:inset 0 0 0 1px rgba(255,255,255,.75)"></div>
<div class="t" style="left:1087.50px;top:1098.18px;line-height:29px;height:29px;letter-spacing:-1.603px;color:#000;">Close</div>
<div class="a" style="left:1192px;top:1095px;width:135px;height:37px;border:1px solid #adb2b5;border-radius:3px;background:#f4f4f4;box-shadow:inset 0 0 0 1px #fcfcfc"></div>
<div class="t" style="left:1237.30px;top:1098.18px;line-height:29px;height:29px;letter-spacing:-1.970px;color:#838383;">Back</div>
<div class="a" style="left:1339px;top:1095px;width:135px;height:37px;border:1px solid #adb2b5;border-radius:3px;background:#f4f4f4;box-shadow:inset 0 0 0 1px #fcfcfc"></div>
<div class="t" style="left:1368.05px;top:1098.18px;line-height:29px;height:29px;letter-spacing:-0.492px;color:#838383;">Forward</div>
<div class="a" style="left:1486px;top:1095px;width:135px;height:37px;border:1px solid #707070;border-radius:3px;background:linear-gradient(to bottom,#f2f2f2 0,#ebebeb 46%,#dddddd 50%,#cfcfcf 100%);box-shadow:inset 0 0 0 1px rgba(255,255,255,.75)"></div>
<div class="t" style="left:1532.30px;top:1098.18px;line-height:29px;height:29px;letter-spacing:-1.004px;color:#000;">Help</div>

</div>
</body></html>
